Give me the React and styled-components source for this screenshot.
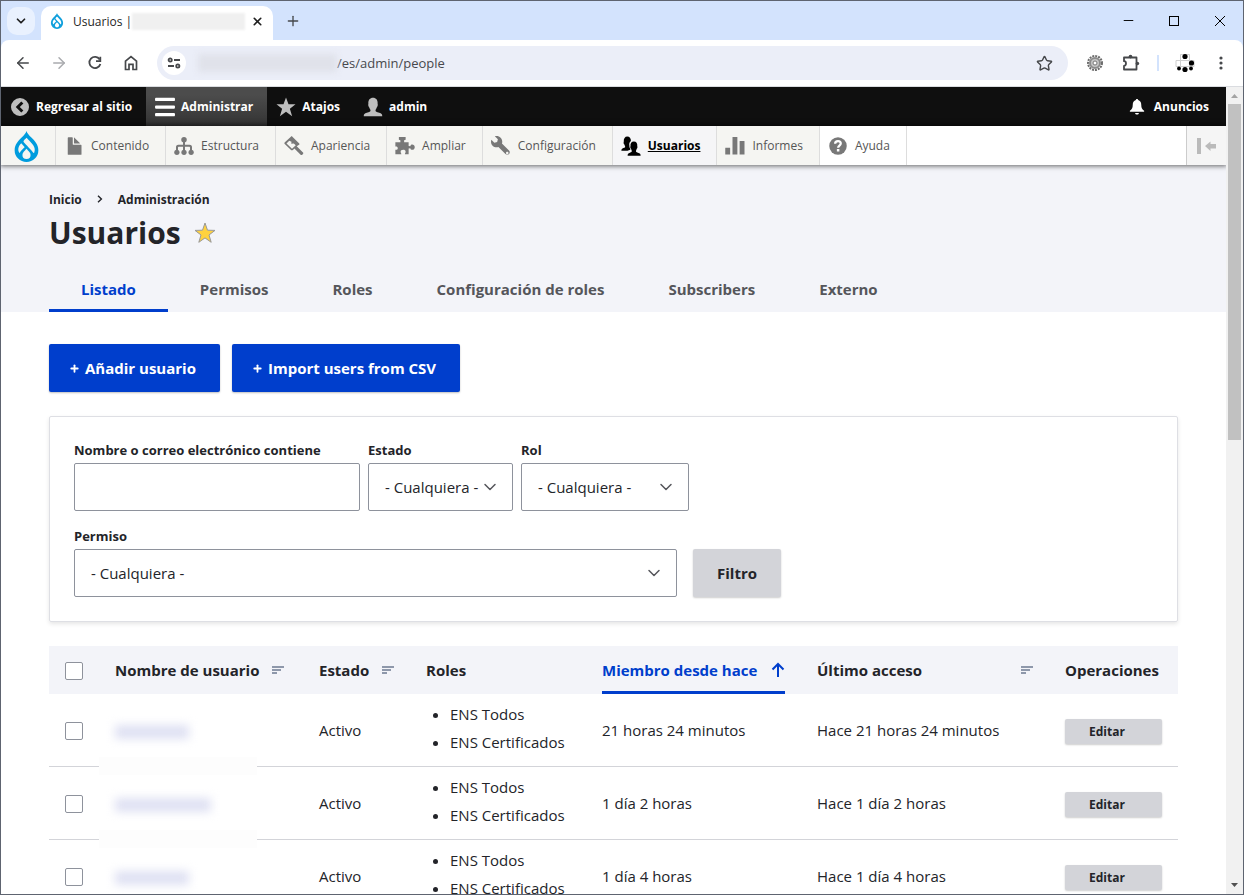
import styled, { createGlobalStyle, css } from 'styled-components';
import { ArrowLeft, ArrowRight, ChevronDown, Minus, Plus, Star, X } from 'lucide-react';
import { SiDrupal } from 'react-icons/si';

const GlobalStyle = createGlobalStyle`
    * {
        box-sizing: border-box;
    }
    body {
        margin: 0;
        color: #232429;
        font-family: "Open Sans", "Noto Sans", sans-serif;
        font-size: 15px;
    }
    button, input, select {
        font: inherit;
        color: inherit;
    }
    a {
        color: inherit;
        text-decoration: none;
    }
    svg {
        display: block;
        flex: none;
    }
`;

const Browser = styled.div`
    display: flex;
    flex-direction: column;
    height: 100vh;
    overflow: hidden;
    border: 1px solid #5e6470;
    background: #d3e3fd;
`;

const TabStrip = styled.div`
    display: flex;
    align-items: center;
    height: 39px;
    flex: none;
    padding-left: 6px;
`;

const PlainButton = styled.button`
    display: flex;
    align-items: center;
    justify-content: center;
    padding: 0;
    border: 0;
    background: none;
    color: ${(props) => props.$color || '#46484b'};
    width: ${(props) => props.$width || 28}px;
    height: 28px;
    flex: none;
`;

const TabSearch = styled(PlainButton)`
    border-radius: 10px;
    background: #e9f1fe;
    color: #1f1f1f;
    margin-right: 6px;
`;

const BrowserTab = styled.div`
    display: flex;
    align-items: center;
    align-self: flex-end;
    height: 34px;
    width: 232px;
    margin-right: 6px;
    padding: 0 2px 4px 8px;
    border-radius: 10px 10px 0 0;
    background: #fff;
    color: #1f1f1f;
    font-size: 12px;
`;

const TabTitle = styled.span`
    margin-left: 8px;
    white-space: nowrap;
`;

const Redacted = styled.span`
    display: block;
    flex: none;
    width: ${(props) => props.$width}px;
    height: ${(props) => props.$height}px;
    background: ${(props) => props.$color};
    filter: blur(${(props) => props.$blur}px);
`;

const TabClose = styled(PlainButton)`
    width: 24px;
    color: #1f1f1f;
`;

const WindowButtons = styled.div`
    display: flex;
    margin-left: auto;
`;

const NavBar = styled.div`
    display: flex;
    align-items: center;
    height: 47px;
    flex: none;
    padding-left: 4px;
    border-bottom: 1px solid #dadce0;
    border-radius: 8px 8px 0 0;
    background: #fff;
`;

const AddressBar = styled.div`
    display: flex;
    align-items: center;
    flex: 1;
    height: 34px;
    margin: 0 9px 0 8px;
    padding: 0 10px 0 5px;
    border-radius: 17px;
    background: #ebeef8;
    color: #47484c;
    font-size: 13px;
`;

const SiteInfo = styled(PlainButton)`
    width: 24px;
    height: 24px;
    margin-right: 12px;
    border-radius: 50%;
    background: #fff;
`;

const AddressStar = styled(PlainButton)`
    margin-left: auto;
`;

const NavDivider = styled.div`
    width: 2px;
    height: 16px;
    margin: 0 12px 0 8px;
    background: #d3e3fd;
`;

const Viewport = styled.div`
    display: flex;
    flex: 1;
    min-height: 0;
    background: #fff;
`;

const Page = styled.div`
    flex: 1;
    min-width: 0;
    overflow: hidden;
`;

const ScrollBar = styled.div`
    display: flex;
    flex-direction: column;
    align-items: center;
    width: 17px;
    flex: none;
    background: #f1f1f1;
`;

const ScrollArrow = styled.svg`
    width: 17px;
    height: 17px;
    fill: ${(props) => props.$color};
`;

const ScrollThumb = styled.div`
    width: 13px;
    height: 336px;
    margin-bottom: auto;
    background: #c1c1c1;
`;

const AdminBar = styled.nav`
    display: flex;
    height: 39px;
    background: #0f0f0f;
    color: #fff;
    font-size: 12px;
    font-weight: 700;
`;

const AdminLink = styled.a`
    display: flex;
    align-items: center;
    gap: 6px;
    padding: 0 14px 0 9px;
    white-space: nowrap;
    ${(props) => props.$active && css`
        background: linear-gradient(#4c4c4c 20%, #333);
    `}
    ${(props) => props.$right && css`
        margin-left: auto;
        padding-right: 17px;
        gap: 7px;
    `}
`;

const Tray = styled.nav`
    position: relative;
    display: flex;
    height: 39px;
    background: #fff;
    color: #565656;
    font-size: 12px;
    box-shadow: 0 0 5px 1px rgba(0, 0, 0, 0.6);
`;

const TrayLink = styled.a`
    display: flex;
    align-items: center;
    gap: 7px;
    padding: 0 16px 0 8px;
    border-right: 1px solid #ddd;
    background: ${(props) => props.$background || '#f5f5f2'};
    white-space: nowrap;
    svg {
        color: #787878;
    }
    ${(props) => props.$active && css`
        color: #000;
        font-weight: 700;
        text-decoration: underline;
        svg {
            color: #000;
        }
    `}
`;

const HomeLink = styled.a`
    display: flex;
    align-items: center;
    justify-content: center;
    width: 55px;
    padding: 2px 4px 0 0;
    border-right: 1px solid #ddd;
    background: #f5f5f2;
    color: #009cde;
`;

const TrayToggle = styled.button`
    display: flex;
    align-items: center;
    justify-content: center;
    width: 40px;
    margin-left: auto;
    padding: 0;
    border: 0;
    border-left: 1px solid #ccc;
    background: #f5f5f5;
    color: #bababa;
`;

const PageHeader = styled.header`
    padding: 22px 48px 0;
    background: #f3f4f9;
`;

const Breadcrumb = styled.div`
    display: flex;
    align-items: center;
    gap: 15px;
    height: 24px;
    font-size: 12px;
    font-weight: 700;
`;

const TitleRow = styled.div`
    display: flex;
    align-items: center;
    gap: 13px;
    height: 43px;
`;

const Title = styled.h1`
    margin: 0;
    font-size: 30px;
    font-weight: 700;
`;

const Tabs = styled.nav`
    display: flex;
    margin-top: 10px;
`;

const Tab = styled.a`
    height: 48px;
    padding: 0 32px;
    border-bottom: 3px solid ${(props) => (props.$active ? '#003ecc' : 'transparent')};
    color: ${(props) => (props.$active ? '#003ecc' : '#55565b')};
    font-weight: 700;
    line-height: 50px;
    white-space: nowrap;
`;

const Content = styled.main`
    display: flex;
    flex-direction: column;
    gap: 24px;
    padding: 32px 48px;
`;

const Actions = styled.div`
    display: flex;
    gap: 12px;
`;

const ActionLink = styled.a`
    display: flex;
    align-items: center;
    gap: 5px;
    height: 48px;
    padding: 0 24px 0 20px;
    border-radius: 2px;
    background: #003ecc;
    box-shadow: 0 1px 2px rgba(0, 0, 0, 0.25);
    color: #fff;
    font-weight: 700;
`;

const FilterForm = styled.form`
    display: flex;
    flex-direction: column;
    gap: 16px;
    padding: 24px;
    border: 1px solid #dedfe4;
    border-radius: 2px;
    box-shadow: 0 2px 4px rgba(0, 0, 0, 0.1);
`;

const FilterRow = styled.div`
    display: flex;
    align-items: flex-end;
    gap: ${(props) => props.$gap}px;
`;

const Field = styled.div`
    display: flex;
    flex-direction: column;
    gap: 4px;
    width: ${(props) => props.$width}px;
`;

const Label = styled.label`
    font-size: 13px;
    font-weight: 700;
    line-height: 18px;
`;

const control = css`
    width: 100%;
    height: 48px;
    padding: 0 16px;
    border: 1px solid #8e929c;
    border-radius: 2px;
    background: #fff;
`;

const TextInput = styled.input`
    ${control}
`;

const SelectWrapper = styled.div`
    position: relative;
    svg {
        position: absolute;
        top: 14px;
        right: 13px;
        color: #55565b;
        pointer-events: none;
    }
`;

const SelectInput = styled.select`
    ${control}
    appearance: none;
`;

const FilterButton = styled.button`
    height: 48px;
    padding: 0 24px;
    border: 0;
    border-radius: 2px;
    background: #d3d4d9;
    box-shadow: 0 1px 2px rgba(0, 0, 0, 0.2);
    font-weight: 700;
`;

const Table = styled.table`
    width: 100%;
    border-spacing: 0;
    table-layout: fixed;
`;

const Column = styled.col`
    width: ${(props) => (props.$width ? `${props.$width}px` : 'auto')};
`;

const HeadCell = styled.th`
    height: 48px;
    padding: 0 16px;
    background: #f3f4f9;
    text-align: left;
    white-space: nowrap;
`;

const SortLink = styled.a`
    display: flex;
    align-items: center;
    justify-content: ${(props) => (props.$spread ? 'space-between' : 'flex-start')};
    gap: 13px;
    height: 48px;
    ${(props) => props.$active && css`
        justify-content: space-between;
        border-bottom: 3px solid #003ecc;
        padding-top: 3px;
        color: #003ecc;
    `}
`;

const Cell = styled.td`
    position: relative;
    height: 73px;
    padding: 0 16px;
    border-bottom: 1px solid #d3d4d9;
    white-space: nowrap;
`;

const NameCell = styled(Cell)`
    padding-top: 3px;
    &::after {
        content: "";
        position: absolute;
        left: 0;
        bottom: -9px;
        width: 158px;
        height: 18px;
        background: #fdfdfd;
    }
`;

const Checkbox = styled.input`
    display: block;
    appearance: none;
    width: 18px;
    height: 18px;
    margin: 1px 0 0;
    border: 1px solid #8e929c;
    border-radius: 2px;
    background: #fff;
`;

const RoleList = styled.ul`
    margin: 0;
    padding: 0 0 4px 24px;
    line-height: 28px;
`;

const EditLink = styled.a`
    display: block;
    width: 97px;
    margin-top: 2px;
    padding: 0 24px;
    border-radius: 2px;
    background: #d3d4d9;
    box-shadow: 0 1px 2px rgba(0, 0, 0, 0.2);
    font-size: 12px;
    font-weight: 700;
    line-height: 25px;
`;

const icons = {
    back: (
        <path fillRule="evenodd" d="M8 .8a7.2 7.2 0 1 0 0 14.4A7.2 7.2 0 0 0 8 .8zM9 3.6l1.7 1.6L7.8 8l2.9 2.8L9 12.4 4.6 8z" />
    ),
    menu: (
        <path d="M.6.6h14.8c.8 0 .8 2.6 0 2.6H.6C-.2 3.2-.2.6.6.6zM.6 6.7h14.8c.8 0 .8 2.6 0 2.6H.6c-.8 0-.8-2.6 0-2.6zM.6 12.8h14.8c.8 0 .8 2.6 0 2.6H.6c-.8 0-.8-2.6 0-2.6z" />
    ),
    star: (
        <path d="M8 .4l2 5.3 5.6.1-4.5 3.5 1.8 6L8 11.8l-4.9 3.5 1.8-6L.4 5.8 6 5.7z" />
    ),
    user: (
        <path d="M.6 15.4c0-1.8.6-2.3 2.4-2.8 2.2-.6 3-.8 3-1.8 0-.9-.6-1.3-1-2.5-.8-.8-1-2-.7-2.9C4 2.4 5.6.6 8 .6s4 1.8 3.7 4.8c.3.9.1 2.1-.7 2.9-.4 1.2-1 1.6-1 2.5 0 1 .8 1.2 3 1.8 1.8.5 2.4 1 2.4 2.8z" />
    ),
    bell: (
        <path d="M8 1.500c.6 0 .9.3.9.9 1.700.5 2.500 1.800 2.500 3.700 0 2.800.8 3.800 2.300 4.800v.9H2.300v-.9c1.500-1 2.300-2 2.300-4.800 0-1.900.8-3.200 2.500-3.700 0-.6.3-.9.9-.9zM6.500 12.700h3c0 .8-.7 1.300-1.500 1.300s-1.500-.5-1.500-1.300z" />
    ),
    file: (
        <path d="M12.502 7h-5c-.276 0-.502-.225-.502-.5v-5c0-.275-.225-.5-.5-.5h-3c-.276 0-.5.225-.5.5v13.029c0 .275.225.5.5.5h10c.275 0 .5-.225.5-.5v-7.029c0-.275-.225-.5-.498-.5zM8.502 6h4c.275 0 .34-.159.146-.354l-4.293-4.292c-.195-.195-.353-.129-.353.146v4c-.001.275.224.5.5.5z" />
    ),
    structure: (
        <>
            <path d="M7.2 4h1.6v3h3.7c1.3 0 1.9.7 1.9 1.9V12h-1.6V9.4c0-.6-.2-.8-.8-.8H8.8V12H7.2V8.6H4c-.6 0-.8.2-.8.8V12H1.6V8.9C1.6 7.7 2.2 7 3.5 7h3.7z" />
            <circle cx="8" cy="3" r="2.2" />
            <circle cx="2.3" cy="13" r="2.1" />
            <circle cx="8" cy="13" r="2.1" />
            <circle cx="13.7" cy="13" r="2.1" />
        </>
    ),
    appearance: (
        <path fillRule="evenodd" d="M6.7.5l5.5 5.5c.4.4.2.8-.5 1.2l-1.5 1 5.200 5.100c.5.6-1.300 2.400-1.900 1.900L8.300 10c-1.300 1.600-2.200 1.800-2.900 1L.6 6.300c-.5-.5-.4-.9.1-1.300L5.500.5c.4-.4.8-.4 1.200 0zM4.200 3.800L2 5.900l4.400 4.300 3-2.900-1.600-1.300-2 .1.200-1.500z" />
    ),
    extend: (
        <path d="M4.300 5V3.300L3.100 3V.8h5.400V3l-1.200.3V5h3.600v2.900l1.300.2.500-1c1.300-.8 3.100 0 3.100 1.800s-1.800 2.600-3.100 1.800l-.5-1-1.300.2v4.700H7.900c0-.8.600-1.200.6-2.100 0-1-.8-1.500-2-1.500s-2 .6-2 1.500c0 .9.600 1.300.6 2.100H.3V11c1.200.2 1.900-.3 1.900-1.300S1.500 8.200.3 8.400V5z" />
    ),
    wrench: (
        <path d="M14.416 11.586l-.01-.008v-.001l-5.656-5.656c.15-.449.252-.921.252-1.421 0-2.485-2.016-4.5-4.502-4.5-.505 0-.981.102-1.434.255l2.431 2.431-.588 2.196-2.196.588-2.445-2.445c-.162.464-.268.956-.268 1.475 0 2.486 2.014 4.5 4.5 4.5.5 0 .972-.102 1.421-.251l5.667 5.665c.781.781 2.047.781 2.828 0s.781-2.047 0-2.828zm-1.414 2.914c-.553 0-1-.447-1-1s.447-1 1-1 1 .447 1 1-.447 1-1 1z" />
    ),
    people: (
        <>
            <path d="M.3 11.8c0-1.3.5-1.8 1.6-2.2 1.2-.4 1.5-.6 1.4-1.3l-.6-1.5C2 6.1 2 5.2 2.2 4.5 2 2 3.2.4 5 .4S8.1 2 7.9 4c-1.2.9-1.5 2.3-1.2 3.7-.1.8.1 1.5.5 2l.3 1.2c-.8.4-1.8.5-2.2.9z" />
            <path d="M5.3 15.7c0-1.5.5-2 1.8-2.4 1.3-.4 1.6-.7 1.5-1.5L8 10.2c-.6-.6-.7-1.5-.4-2.2-.3-2.3.8-3.7 2.7-3.7s3 1.4 2.7 3.7c.3.7.2 1.6-.4 2.2l-.6 1.6c-.1.8.2 1.1 1.5 1.5 1.7.4 2.2.9 2.2 2.4z" />
        </>
    ),
    reports: (
        <path d="M.5 9.4h3.3c.2 0 .3.1.3.3v5.1H.2V9.7c0-.2.1-.3.3-.3zM6.3.7h3.3c.2 0 .3.1.3.3v13.8H6V1c0-.2.1-.3.3-.3zM12 4h3.3c.2 0 .3.1.3.3v10.500h-3.9V4.300c0-.2.1-.3.3-.3z" />
    ),
    help: (
        <>
            <circle cx="8" cy="8" r="7" />
            <path d="M5.7 6.2c0-1.3 1-2.1 2.3-2.1s2.200.8 2.200 1.900c0 1.600-2.100 1.700-2.100 3.300" fill="none" stroke="#fff" strokeWidth="1.8" />
            <rect x="7.1" y="10.4" width="2" height="2" fill="#fff" />
        </>
    ),
};

const Icon = ({ name, color }) => (
    <svg width="20" height="20" viewBox="0 0 16 16" fill={color || 'currentColor'} aria-hidden="true">
        {icons[name]}
    </svg>
);

const SortIcon = () => (
    <svg width="12" height="9" viewBox="0 0 12 9" fill="#8e98ab" aria-hidden="true">
        <path d="M0 0h12v2H0zM0 3h9v2H0zM0 6h5v2H0z" />
    </svg>
);

const trayLinks = [
    { icon: 'file', text: 'Contenido' },
    { icon: 'structure', text: 'Estructura' },
    { icon: 'appearance', text: 'Apariencia' },
    { icon: 'extend', text: 'Ampliar' },
    { icon: 'wrench', text: 'Configuración' },
    { icon: 'people', text: 'Usuarios', active: true, background: '#f5f5f7' },
    { icon: 'reports', text: 'Informes' },
    { icon: 'help', text: 'Ayuda', background: '#fff' },
];

const tabs = ['Listado', 'Permisos', 'Roles', 'Configuración de roles', 'Subscribers', 'Externo'];

const users = [
    { id: 1, nameWidth: 74, member: '21 horas 24 minutos', access: 'Hace 21 horas 24 minutos' },
    { id: 2, nameWidth: 96, member: '1 día 2 horas', access: 'Hace 1 día 2 horas' },
    { id: 3, nameWidth: 74, member: '1 día 4 horas', access: 'Hace 1 día 4 horas' },
];

const BrowserChrome = () => (
    <>
        <TabStrip>
            <TabSearch aria-label="Buscar pestañas">
                <ChevronDown size={14} strokeWidth={3} />
            </TabSearch>
            <BrowserTab>
                <SiDrupal size={16} color="#0f9fdc" />
                <TabTitle>Usuarios |</TabTitle>
                <Redacted $width={113} $height={17} $color="#f0f0f0" $blur={1} />
                <TabClose aria-label="Cerrar pestaña">
                    <X size={13} strokeWidth={3} />
                </TabClose>
            </BrowserTab>
            <PlainButton aria-label="Nueva pestaña">
                <Plus size={16} />
            </PlainButton>
            <WindowButtons>
                <PlainButton $width={46} $color="#000" aria-label="Minimizar">
                    <Minus size={15} strokeWidth={1.5} />
                </PlainButton>
                <PlainButton $width={46} $color="#000" aria-label="Maximizar">
                    <svg width="10" height="10" viewBox="0 0 10 10" fill="none" stroke="currentColor">
                        <rect x=".5" y=".5" width="9" height="9" />
                    </svg>
                </PlainButton>
                <PlainButton $width={46} $color="#000" aria-label="Cerrar">
                    <svg width="10" height="10" viewBox="0 0 10 10" fill="none" stroke="currentColor">
                        <path d="M0 0l10 10M10 0L0 10" />
                    </svg>
                </PlainButton>
            </WindowButtons>
        </TabStrip>
        <NavBar>
            <PlainButton $width={36} aria-label="Atrás">
                <ArrowLeft size={18} />
            </PlainButton>
            <PlainButton $width={36} $color="#a9abae" aria-label="Adelante">
                <ArrowRight size={18} />
            </PlainButton>
            <PlainButton $width={36} aria-label="Recargar">
                <svg width="16" height="16" viewBox="0 0 16 16" fill="none" stroke="currentColor" strokeWidth="1.8">
                    <path d="M12.7 4.4A5.6 5.6 0 1 0 13.4 9" />
                    <path d="M13.3 1.8v4.4H9" />
                </svg>
            </PlainButton>
            <PlainButton $width={36} aria-label="Inicio">
                <svg width="16" height="16" viewBox="0 0 16 16" fill="none" stroke="currentColor" strokeWidth="1.7">
                    <path d="M2.5 6.2L8 1.7l5.5 4.5v8.3H10V9.3H6v5.2H2.5z" />
                </svg>
            </PlainButton>
            <AddressBar>
                <SiteInfo aria-label="Información del sitio">
                    <svg width="14" height="12" viewBox="0 0 14 12" fill="none" stroke="currentColor" strokeWidth="1.8">
                        <circle cx="3.2" cy="3" r="1.6" />
                        <circle cx="10.8" cy="9" r="1.6" />
                        <path d="M7 3h6M1 9h6" />
                    </svg>
                </SiteInfo>
                <Redacted $width={139} $height={18} $color="#e0e2ea" $blur={3} />
                <span>/es/admin/people</span>
                <AddressStar aria-label="Añadir a marcadores">
                    <Star size={17} />
                </AddressStar>
            </AddressBar>
            <PlainButton $width={36} aria-label="Extensión">
                <svg width="18" height="18" viewBox="0 0 18 18" fill="none">
                    <circle cx="9" cy="9" r="7" stroke="#6c6c6c" strokeWidth="2" strokeDasharray="2 1" />
                    <circle cx="9" cy="9" r="5" fill="#c4c4c4" stroke="#8c8c8c" strokeWidth="2" />
                    <circle cx="9" cy="9" r="2" fill="#fff" stroke="#777" />
                </svg>
            </PlainButton>
            <PlainButton $width={36} aria-label="Extensiones">
                <svg width="18" height="18" viewBox="0 0 18 18">
                    <path d="M2 3.5h12.5v12H2v-3.7c1.2 0 2-.9 2-2.3S3.2 7.2 2 7.2z" fill="none" stroke="currentColor" strokeWidth="1.8" strokeLinejoin="round" />
                    <circle cx="8.5" cy="2.6" r="1.8" fill="currentColor" />
                    <circle cx="15.4" cy="9.5" r="1.8" fill="currentColor" />
                </svg>
            </PlainButton>
            <NavDivider />
            <PlainButton aria-label="Perfil">
                <svg width="20" height="20" viewBox="0 0 20 20">
                    <path d="M5.5 1.5h9v12h-9zM1 7.5h18v6H1z" fill="#fff" stroke="#cfcfcf" />
                    <g fill="#000">
                        <circle cx="10" cy="3.5" r="2.6" />
                        <circle cx="16.5" cy="10" r="2.6" />
                        <circle cx="10" cy="16.5" r="2.6" />
                        <circle cx="4" cy="15.5" r="1.9" />
                        <circle cx="16" cy="15.5" r="1.9" />
                    </g>
                </svg>
            </PlainButton>
            <PlainButton $width={44} aria-label="Menú">
                <svg width="4" height="14" viewBox="0 0 4 14" fill="currentColor">
                    <circle cx="2" cy="2" r="1.6" />
                    <circle cx="2" cy="7" r="1.6" />
                    <circle cx="2" cy="12" r="1.6" />
                </svg>
            </PlainButton>
        </NavBar>
    </>
);

const Toolbar = () => (
    <>
        <AdminBar>
            <AdminLink href="#sitio"><Icon name="back" color="#bebebe" />Regresar al sitio</AdminLink>
            <AdminLink href="#administrar" $active><Icon name="menu" />Administrar</AdminLink>
            <AdminLink href="#atajos"><Icon name="star" color="#bebebe" />Atajos</AdminLink>
            <AdminLink href="#admin"><Icon name="user" color="#bebebe" />admin</AdminLink>
            <AdminLink href="#anuncios" $right><Icon name="bell" />Anuncios</AdminLink>
        </AdminBar>
        <Tray>
            <HomeLink href="#inicio" aria-label="Drupal"><SiDrupal size={31} /></HomeLink>
            {trayLinks.map((link) => (
                <TrayLink key={link.text} href="#tray" $active={link.active} $background={link.background}>
                    <Icon name={link.icon} />
                    {link.text}
                </TrayLink>
            ))}
            <TrayToggle aria-label="Orientación vertical">
                <svg width="20" height="16" viewBox="0 0 20 16" fill="currentColor">
                    <path d="M0 0h4v16H0zM8 8l5.500-4.500V6H19v4.500h-5.500V13z" />
                </svg>
            </TrayToggle>
        </Tray>
    </>
);

const Select = ({ id, label, width }) => (
    <Field $width={width}>
        <Label htmlFor={id}>{label}</Label>
        <SelectWrapper>
            <SelectInput id={id}>
                <option>- Cualquiera -</option>
            </SelectInput>
            <ChevronDown size={20} strokeWidth={1.8} />
        </SelectWrapper>
    </Field>
);

const Filters = () => (
    <FilterForm>
        <FilterRow $gap={8}>
            <Field $width={286}>
                <Label htmlFor="user">Nombre o correo electrónico contiene</Label>
                <TextInput id="user" type="text" />
            </Field>
            <Select id="status" label="Estado" width={145} />
            <Select id="role" label="Rol" width={168} />
        </FilterRow>
        <FilterRow $gap={16}>
            <Select id="permission" label="Permiso" width={603} />
            <FilterButton type="button">Filtro</FilterButton>
        </FilterRow>
    </FilterForm>
);

const UserTable = () => (
    <Table>
        <colgroup>
            <Column $width={50} />
            <Column $width={204} />
            <Column $width={107} />
            <Column $width={176} />
            <Column $width={215} />
            <Column />
            <Column $width={129} />
        </colgroup>
        <thead>
            <tr>
                <HeadCell><Checkbox type="checkbox" aria-label="Seleccionar todas las filas" /></HeadCell>
                <HeadCell><SortLink href="#nombre">Nombre de usuario<SortIcon /></SortLink></HeadCell>
                <HeadCell><SortLink href="#estado">Estado<SortIcon /></SortLink></HeadCell>
                <HeadCell>Roles</HeadCell>
                <HeadCell>
                    <SortLink href="#miembro" $active>
                        Miembro desde hace
                        <svg width="14" height="16" viewBox="0 0 14 16" fill="none" stroke="currentColor" strokeWidth="2">
                            <path d="M7 15V2M1.5 7.5L7 2l5.5 5.5" />
                        </svg>
                    </SortLink>
                </HeadCell>
                <HeadCell><SortLink href="#acceso" $spread>Último acceso<SortIcon /></SortLink></HeadCell>
                <HeadCell>Operaciones</HeadCell>
            </tr>
        </thead>
        <tbody>
            {users.map((user) => (
                <tr key={user.id}>
                    <Cell><Checkbox type="checkbox" aria-label="Seleccionar fila" /></Cell>
                    <NameCell><Redacted $width={user.nameWidth} $height={14} $color="#dfe1f3" $blur={5} /></NameCell>
                    <Cell>Activo</Cell>
                    <Cell>
                        <RoleList>
                            <li>ENS Todos</li>
                            <li>ENS Certificados</li>
                        </RoleList>
                    </Cell>
                    <Cell>{user.member}</Cell>
                    <Cell>{user.access}</Cell>
                    <Cell><EditLink href="#editar">Editar</EditLink></Cell>
                </tr>
            ))}
        </tbody>
    </Table>
);

const App = () => {
    return (
        <Browser>
            <GlobalStyle />
            <BrowserChrome />
            <Viewport>
                <Page>
                    <Toolbar />
                    <PageHeader>
                        <Breadcrumb>
                            <a href="#inicio">Inicio</a>
                            <svg width="6" height="8" viewBox="0 0 6 8" fill="none" stroke="currentColor" strokeWidth="1.4">
                                <path d="M1 .8L4.4 4 1 7.2" />
                            </svg>
                            <a href="#administracion">Administración</a>
                        </Breadcrumb>
                        <TitleRow>
                            <Title>Usuarios</Title>
                            <svg width="22" height="22" viewBox="0 0 22 22">
                                <path d="M11 1l2.5 7.2 7.5.2-6 4.6 2.2 7.3-6.2-4.4-6.2 4.4L7 13 1 8.4l7.5-.2z" fill="#ffd23f" stroke="#999" />
                            </svg>
                        </TitleRow>
                        <Tabs>
                            {tabs.map((tab, index) => (
                                <Tab key={tab} href="#tab" $active={index === 0}>{tab}</Tab>
                            ))}
                        </Tabs>
                    </PageHeader>
                    <Content>
                        <Actions>
                            <ActionLink href="#nuevo"><Plus size={11} strokeWidth={4} />Añadir usuario</ActionLink>
                            <ActionLink href="#importar"><Plus size={11} strokeWidth={4} />Import users from CSV</ActionLink>
                        </Actions>
                        <Filters />
                        <UserTable />
                    </Content>
                </Page>
                <ScrollBar>
                    <ScrollArrow viewBox="0 0 17 17" $color="#a3a3a3"><path d="M5 11l3.5-4 3.5 4z" /></ScrollArrow>
                    <ScrollThumb />
                    <ScrollArrow viewBox="0 0 17 17" $color="#505050"><path d="M5 6l3.5 4L12 6z" /></ScrollArrow>
                </ScrollBar>
            </Viewport>
        </Browser>
    );
};

export default App;
